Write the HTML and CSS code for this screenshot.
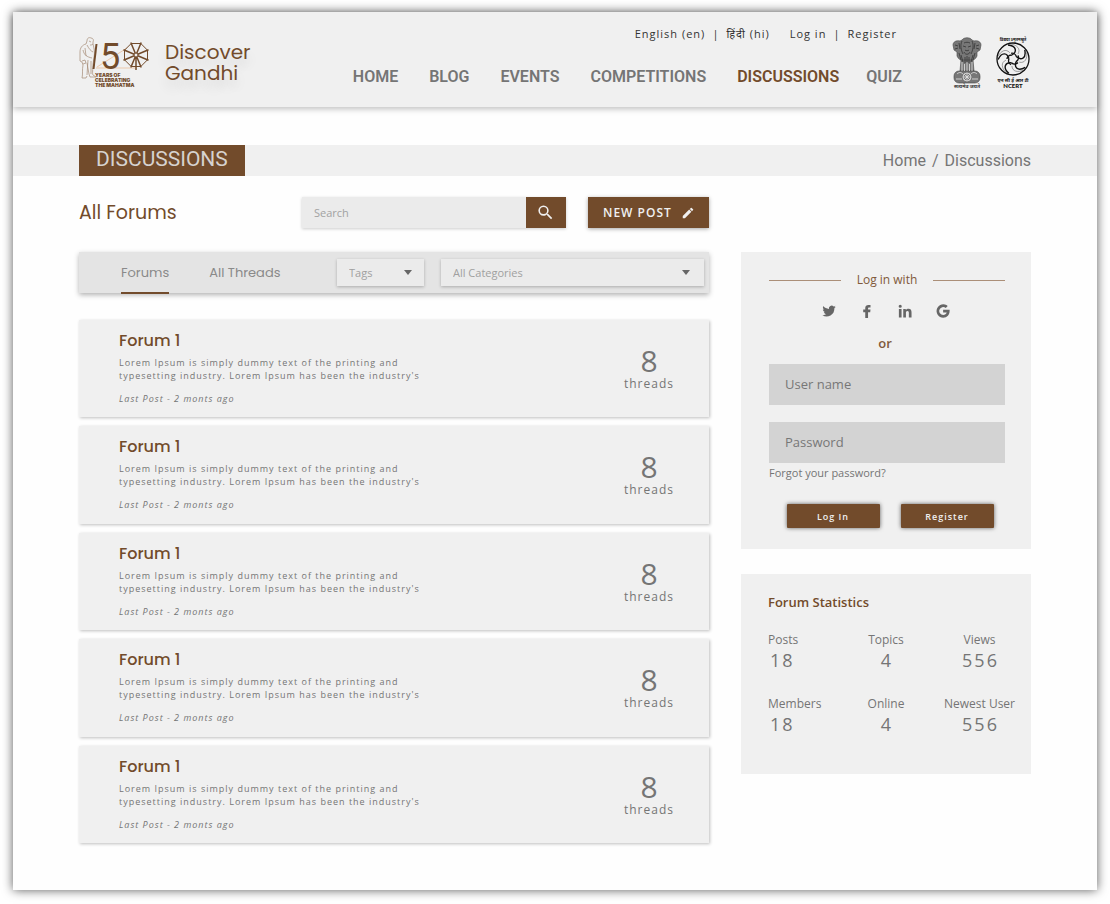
FILE: index.html
```html
<!DOCTYPE html>
<html lang="en">
<head>
<meta charset="utf-8">
<title>Discover Gandhi - Discussions</title>
<link rel="stylesheet" href="styles.css">
</head>
<body>
<div class="page">
  <header class="header">
    <a class="brand" href="#">
      <svg class="logo" viewBox="0 0 72 54" role="img" aria-label="150 years of celebrating the Mahatma">
        <path class="tint" d="M18 31 L48 12 M17 32 H58"/>
        <g class="figure">
          <path d="M8 5c0-3 2-4 4-3 2 0 3 2 2 4l0 2c-1 1-2 1-3 1M8 5l-1 3c-4 1-6 4-6 8v9l2 1 1 3c-1 5 0 9-1 13l4 0 1-2M14 8c1 4 2 8 1 14l-1 6c0 5-1 10 0 11l3 2h-6l-1-3-2-11M4 14c1 5 4 7 9 8M8 9c2 4 4 6 6 7M3 25l3-1 1 3-3 1M9 24l-1 15M12 25l0 13M10 5l2 1M6 12l1 8"/>
        </g>
        <path class="staff" d="M17.500 8 L14.500 33"/>
        <text class="numeral" x="21" y="33">5</text>
        <g class="wheel">
          <path d="M52.200 7.500H61.800L68.500 14.200V23.800L61.800 30.500H52.200L45.500 23.800V14.200z"/>
          <path class="spokes" d="M51.800 6.500L62.200 31.500M62.200 6.500L51.800 31.500M44.500 13.800L69.500 24.200M69.500 13.800L44.500 24.200M57 19V34"/>
          <circle cx="57" cy="19" r="2"/>
        </g>
        <g class="caption">
          <text x="16" y="41">YEARS OF</text>
          <text x="16" y="46">CELEBRATING</text>
          <text x="16" y="51">THE MAHATMA</text>
        </g>
      </svg>
      <span class="brand-name">Discover<br>Gandhi</span>
    </a>
    <div class="menus">
      <nav class="utility" aria-label="Language and account">
        <a href="#">English (en)</a><span>|</span><a href="#">हिंदी (hi)</a>
        <a class="utility-account" href="#">Log in</a><span>|</span><a href="#">Register</a>
      </nav>
      <nav class="main-nav" aria-label="Main">
        <a href="#">HOME</a>
        <a href="#">BLOG</a>
        <a href="#">EVENTS</a>
        <a href="#">COMPETITIONS</a>
        <a class="current" href="#" aria-current="page">DISCUSSIONS</a>
        <a href="#">QUIZ</a>
      </nav>
    </div>
    <div class="emblems">
      <svg class="emblem" viewBox="0 0 30 52" role="img" aria-label="Emblem of India">
        <g class="emblem-fill">
          <path d="M10 3c2-3 8-3 10 0l2 1c4-1 7 1 7 4l-1 5-3 2v4c-1 3-4 4-5 5H10c-1-1-4-2-5-5v-4l-3-2-1-5c0-3 3-5 7-4z"/>
          <path d="M9 23h12l1 11H8z"/>
          <rect x="2" y="34" width="26" height="12" rx="5"/>
        </g>
        <path class="emblem-line" d="M10 4c-2 4-1 9 1 13M20 4c2 4 1 9-1 13M12 6c2-1 4-1 6 0M11 9l3 1M19 9l-3 1M13 13c1 1 3 1 4 0M12 15c1 3 5 3 6 0M9 18l2 7M21 18l-2 7M13 20v6M15 19v7M17 20v6M7 16l2 7M23 16l-2 7M3 8l3 1M27 8l-3 1M3 12l3-1M27 12l-3-1M7 6l1 6M23 6l-1 6"/>
        <path class="emblem-light" d="M10 25v9M12.500 27v7M15 25v9M17.500 27v7M20 25v9M5 37c2-2 4-2 6 0M19 37c2-2 4-2 6 0M4 42h6M20 42h6"/>
        <circle class="emblem-light" cx="15" cy="40" r="4"/>
        <path class="emblem-light" d="M11 40h8M15 36v8M12 37l6 6M18 37l-6 6"/>
        <text class="emblem-text" x="15" y="51">सत्यमेव जयते</text>
      </svg>
      <svg class="ncert" viewBox="0 0 36 52" role="img" aria-label="NCERT">
        <text class="ncert-small" x="18" y="4">विद्यया ऽमृतमश्नुते</text>
        <circle class="ncert-ring" cx="18" cy="22" r="16"/>
        <g class="ncert-swirl">
          <path d="M17 18c5-3 5-9-4-10M17 18c-3 0-5 2-5 4"/>
          <path d="M17 18c5-3 5-9-4-10M17 18c-3 0-5 2-5 4" transform="rotate(72 18 22)"/>
          <path d="M17 18c5-3 5-9-4-10M17 18c-3 0-5 2-5 4" transform="rotate(144 18 22)"/>
          <path d="M17 18c5-3 5-9-4-10M17 18c-3 0-5 2-5 4" transform="rotate(216 18 22)"/>
          <path d="M17 18c5-3 5-9-4-10M17 18c-3 0-5 2-5 4" transform="rotate(288 18 22)"/>
        </g>
        <g class="ncert-trace">
          <path d="M23 17c3-5-1-9-7-10"/>
          <path d="M23 17c3-5-1-9-7-10" transform="rotate(72 18 22)"/>
          <path d="M23 17c3-5-1-9-7-10" transform="rotate(144 18 22)"/>
          <path d="M23 17c3-5-1-9-7-10" transform="rotate(216 18 22)"/>
          <path d="M23 17c3-5-1-9-7-10" transform="rotate(288 18 22)"/>
        </g>
        <text class="ncert-hindi" x="18" y="45">एन सी ई आर टी</text>
        <text class="ncert-name" x="18" y="51">NCERT</text>
      </svg>
    </div>
  </header>

  <div class="title-band">
    <h1>DISCUSSIONS</h1>
    <nav class="breadcrumb" aria-label="Breadcrumb"><a href="#">Home</a><span>/</span><a href="#">Discussions</a></nav>
  </div>

  <div class="content">
    <main class="forums">
      <div class="toolbar">
        <h2>All Forums</h2>
        <form class="search">
          <input type="search" placeholder="Search" aria-label="Search">
          <button type="button" aria-label="Search">
            <svg viewBox="0 0 24 24"><path d="M15.500 14h-.79l-.28-.27A6.470 6.470 0 0 0 16 9.500 6.500 6.500 0 1 0 9.500 16c1.610 0 3.090-.59 4.230-1.570l.27.28v.79l5 4.990L20.490 19zm-6 0a4.500 4.500 0 1 1 0-9 4.500 4.500 0 0 1 0 9z"/></svg>
          </button>
        </form>
        <button class="new-post" type="button">NEW POST
          <svg viewBox="0 0 24 24"><path d="M3 17.250V21h3.750L17.810 9.940l-3.750-3.750zM20.710 7.040a1 1 0 0 0 0-1.410l-2.340-2.340a1 1 0 0 0-1.410 0l-1.830 1.830 3.750 3.750z"/></svg>
        </button>
      </div>

      <div class="filters">
        <nav class="tabs" aria-label="View">
          <a class="tab active" href="#">Forums</a>
          <a class="tab" href="#">All Threads</a>
        </nav>
        <div class="picker picker-tags"><select aria-label="Tags"><option>Tags</option></select></div>
        <div class="picker picker-categories"><select aria-label="Categories"><option>All Categories</option></select></div>
      </div>

      <div class="forum-list">
        <article class="forum">
          <div class="forum-info">
            <h3>Forum 1</h3>
            <p class="about">Lorem Ipsum is simply dummy text of the printing and<br>typesetting industry. Lorem Ipsum has been the industry's</p>
            <p class="last-post">Last Post - 2 monts ago</p>
          </div>
          <div class="threads"><strong>8</strong><span>threads</span></div>
        </article>
        <article class="forum">
          <div class="forum-info">
            <h3>Forum 1</h3>
            <p class="about">Lorem Ipsum is simply dummy text of the printing and<br>typesetting industry. Lorem Ipsum has been the industry's</p>
            <p class="last-post">Last Post - 2 monts ago</p>
          </div>
          <div class="threads"><strong>8</strong><span>threads</span></div>
        </article>
        <article class="forum">
          <div class="forum-info">
            <h3>Forum 1</h3>
            <p class="about">Lorem Ipsum is simply dummy text of the printing and<br>typesetting industry. Lorem Ipsum has been the industry's</p>
            <p class="last-post">Last Post - 2 monts ago</p>
          </div>
          <div class="threads"><strong>8</strong><span>threads</span></div>
        </article>
        <article class="forum">
          <div class="forum-info">
            <h3>Forum 1</h3>
            <p class="about">Lorem Ipsum is simply dummy text of the printing and<br>typesetting industry. Lorem Ipsum has been the industry's</p>
            <p class="last-post">Last Post - 2 monts ago</p>
          </div>
          <div class="threads"><strong>8</strong><span>threads</span></div>
        </article>
        <article class="forum">
          <div class="forum-info">
            <h3>Forum 1</h3>
            <p class="about">Lorem Ipsum is simply dummy text of the printing and<br>typesetting industry. Lorem Ipsum has been the industry's</p>
            <p class="last-post">Last Post - 2 monts ago</p>
          </div>
          <div class="threads"><strong>8</strong><span>threads</span></div>
        </article>
      </div>
    </main>

    <aside class="sidebar">
      <form class="login">
        <div class="login-with">Log in with</div>
        <div class="social">
          <a href="#" aria-label="Twitter"><svg viewBox="0 0 24 24"><path d="M23.600 4.900c-.8.400-1.700.6-2.700.7 1-.6 1.700-1.500 2-2.500-.9.500-1.900.9-3 1.100a4.700 4.700 0 0 0-8 4.300C8 8.300 4.500 6.500 2.200 3.600a4.700 4.700 0 0 0 1.400 6.200c-.7 0-1.500-.2-2.100-.6 0 2.300 1.600 4.200 3.800 4.700-.7.200-1.400.2-2.100.1.600 1.900 2.300 3.200 4.400 3.300A9.400 9.400 0 0 1 .6 19.200 13.300 13.300 0 0 0 21.200 7.300c1-.7 1.800-1.500 2.400-2.400z"/></svg></a>
          <a href="#" aria-label="Facebook"><svg viewBox="0 0 24 24"><path d="M9 24v-10H5.500V9.500H9V7C9 3.500 11 1.500 14.500 1.500H18v4.300h-2.200C14.300 5.800 13.800 6.500 13.800 7.500v2H18l-.5 4.500h-3.700v10z"/></svg></a>
          <a href="#" aria-label="LinkedIn"><svg viewBox="0 0 24 24"><path d="M1.500 8.500h4.600V23H1.500zM3.800 1.200a2.700 2.700 0 1 1 0 5.400 2.700 2.700 0 0 1 0-5.400zM9 8.500h4.400v2c.7-1.300 2.200-2.400 4.500-2.400 4.300 0 5.300 2.700 5.300 6.600V23h-4.600v-7.400c0-1.800-.2-3.600-2.300-3.600-2.200 0-2.700 1.600-2.700 3.500V23H9z"/></svg></a>
          <a href="#" aria-label="Google"><svg viewBox="0 0 24 24"><path d="M12.200 10v4.500h6.200c-.8 2.700-3 4.300-6 4.300a6.800 6.800 0 1 1 4.300-12l3.400-3.400A11.500 11.500 0 1 0 12.200 23.500c7.500 0 11.800-5.400 11.100-13.500z"/></svg></a>
        </div>
        <p class="or">or</p>
        <input class="field" type="text" placeholder="User name" aria-label="User name">
        <input class="field" type="password" placeholder="Password" aria-label="Password">
        <a class="forgot" href="#">Forgot your password?</a>
        <div class="login-actions">
          <button type="button">Log In</button>
          <button type="button">Register</button>
        </div>
      </form>

      <section class="statistics">
        <h2>Forum Statistics</h2>
        <dl class="stats">
          <div><dt>Posts</dt><dd>18</dd></div>
          <div><dt>Topics</dt><dd>4</dd></div>
          <div><dt>Views</dt><dd>556</dd></div>
          <div><dt>Members</dt><dd>18</dd></div>
          <div><dt>Online</dt><dd>4</dd></div>
          <div><dt>Newest User</dt><dd>556</dd></div>
        </dl>
      </section>
    </aside>
  </div>
</div>
</body>
</html>
```
FILE: styles.css
```css
:root {
  --brown: #724b2b;
  --panel: #f0f0f0;
  --grey: #757575;
  --body: "Segoe UI", "Open Sans", "Noto Sans", sans-serif;
  --display: Poppins, Inter, sans-serif;
}

* { box-sizing: border-box; }

body {
  margin: 0;
  padding: 12px 13px 14px;
  background: #fff;
  color: var(--grey);
  font-family: var(--body);
  font-size: 12px;
}

h1, h2, h3, p, dl, dd { margin: 0; }
a { color: inherit; text-decoration: none; }
button, input, select { font: inherit; border: 0; border-radius: 0; }
button { color: #f0f0f0; background: var(--brown); cursor: pointer; }
input::placeholder { color: inherit; opacity: 1; }

.page {
  display: flex;
  flex-direction: column;
  min-height: calc(100vh - 26px);
  background: #fefefe;
  box-shadow: 0 0 10px rgba(0, 0, 0, .65);
}

/* Header */
.header {
  display: flex;
  align-items: flex-start;
  padding: 12px 66px 17px;
  background: var(--panel);
  box-shadow: 0 2px 6px rgba(0, 0, 0, .25);
}

.brand { display: flex; align-items: center; gap: 14px; padding-top: 12px; color: var(--brown); }
.logo { width: 72px; height: 54px; }
.brand-name { font: 400 20px/21px var(--display); text-shadow: 0 8px 12px rgba(0, 0, 0, .12); }

.tint { fill: none; stroke: #ecc9ac; stroke-width: 1; }
.figure { fill: none; stroke: #a58a74; stroke-width: .7; }
.staff { fill: none; stroke: var(--brown); stroke-width: 2; }
.numeral { fill: var(--brown); font: 400 36px Roboto, sans-serif; }
.wheel { fill: none; stroke: var(--brown); stroke-width: 1; }
.wheel .spokes { stroke-width: 1.5; }
.wheel circle { fill: var(--panel); }
.caption { fill: var(--brown); font: 900 5px Inter, sans-serif; }

.menus { display: flex; flex-direction: column; align-items: flex-end; gap: 23px; margin-left: auto; }
.utility {
  display: flex;
  gap: 7px;
  padding-right: 5px;
  color: #333;
  font-size: 11px;
  line-height: 20px;
  letter-spacing: 1px;
}
.utility-account { margin-left: 13px; }
.main-nav { display: flex; gap: 31px; font: 600 16px/20px Roboto, sans-serif; }
.main-nav .current { margin-right: -4px; color: var(--brown); }

.emblems { display: flex; gap: 13px; margin-left: 50px; padding-top: 13px; }
.emblem { width: 30px; height: 52px; }
.ncert { width: 36px; height: 52px; overflow: visible; }
.emblem-fill { fill: #777; stroke: #444; stroke-width: .6; }
.emblem-line { fill: none; stroke: #333; stroke-width: .8; }
.emblem-light { fill: none; stroke: #e4e4e4; stroke-width: .8; }
.emblem-text { fill: #333; font: 700 5px var(--body); text-anchor: middle; }
.ncert text { fill: #111; text-anchor: middle; }
.ncert-small { font: 700 4px var(--body); }
.ncert-hindi { font: 700 5px var(--body); }
.ncert-name { font: 900 6px Lato, sans-serif; }
.ncert-ring { fill: none; stroke: #111; stroke-width: 1.3; }
.ncert-swirl { fill: none; stroke: #111; stroke-width: 1.4; }
.ncert-trace { fill: none; stroke: #555; stroke-width: .5; }

/* Title band */
.title-band {
  display: flex;
  align-items: center;
  justify-content: space-between;
  margin-top: 38px;
  padding: 0 66px;
  background: var(--panel);
}
.title-band h1 {
  padding: 0 17px 3px;
  background: var(--brown);
  color: #d6d2cf;
  font: 400 21px/28px Roboto, sans-serif;
}
.breadcrumb { display: flex; gap: 6px; font: 400 16px/20px Roboto, sans-serif; }

/* Columns */
.content { display: flex; flex: 1; gap: 32px; padding: 21px 66px 47px; }
.forums { display: flex; flex: 1; flex-direction: column; min-width: 0; }
.sidebar { width: 290px; padding-top: 55px; }

.toolbar { display: flex; align-items: center; }
.toolbar h2 { flex: 1; color: var(--brown); font: 400 19px/31px var(--display); }
.search { display: flex; width: 264px; height: 31px; box-shadow: 0 1px 3px rgba(0, 0, 0, .2); }
.search input { flex: 1; min-width: 0; padding: 0 12px; background: #ebebeb; color: #a2a2a2; font-size: 11px; }
.search button { width: 40px; padding: 6px 10px; }
.search svg { display: block; width: 19px; height: 19px; fill: #f0f0f0; }
.new-post {
  display: flex;
  align-items: center;
  justify-content: space-between;
  width: 121px;
  height: 31px;
  margin-left: 22px;
  padding: 0 14px 0 15px;
  box-shadow: 0 1px 4px rgba(0, 0, 0, .35);
  font-size: 12px;
  font-weight: 600;
  letter-spacing: 1px;
}
.new-post svg { width: 14px; height: 14px; fill: #f0f0f0; }

.filters {
  display: flex;
  align-items: center;
  height: 41px;
  margin-top: 24px;
  padding: 0 5px 0 42px;
  background: #e4e4e4;
  box-shadow: 0 2px 5px rgba(0, 0, 0, .3);
}
.tabs { display: flex; flex: 1; gap: 40px; height: 42px; color: #8a8a8a; font: 400 13px/42px var(--display); }
.tab.active { border-bottom: 2px solid var(--brown); }
.picker { position: relative; box-shadow: 0 1px 3px rgba(0, 0, 0, .25); }
.picker select {
  display: block;
  width: 100%;
  height: 27px;
  padding: 0 12px;
  appearance: none;
  background: #ebebeb;
  color: #a0a0a0;
  font-size: 11px;
}
.picker::after {
  content: "";
  position: absolute;
  top: 11px;
  right: 12px;
  border: 4px solid transparent;
  border-top: 5px solid #666;
  border-bottom: 0;
  pointer-events: none;
}
.picker-tags { width: 87px; }
.picker-categories { width: 263px; margin-left: 17px; }
.picker-categories::after { right: 14px; }

/* Forum cards */
.forum-list { display: flex; flex: 1; flex-direction: column; gap: 9px; margin-top: 27px; }
.forum {
  display: flex;
  flex: 1;
  align-items: flex-start;
  justify-content: space-between;
  padding: 10px 35px 9px 40px;
  background: var(--panel);
  box-shadow: 1px 1px 3px rgba(0, 0, 0, .25);
}
.forum h3 { color: var(--brown); font: 500 16px/22px var(--display); }
.about { margin-top: 4px; font-size: 9px; line-height: 13px; letter-spacing: 1px; }
.last-post { margin-top: 10px; font-size: 9px; font-style: italic; line-height: 13px; letter-spacing: 1px; }
.threads { display: flex; flex-direction: column; align-items: center; padding-top: 15px; }
.threads strong { font-size: 30px; font-weight: 400; line-height: 31px; }
.threads span { font-size: 12px; line-height: 16px; letter-spacing: 1px; }

/* Log in */
.login {
  display: flex;
  flex-direction: column;
  padding: 18px 26px 21px 28px;
  background: var(--panel);
}
.login-with { display: flex; align-items: center; gap: 16px; color: #80593a; font-size: 12px; line-height: 20px; }
.login-with::before, .login-with::after { content: ""; flex: 1; height: 1px; background: #ab8f78; }
.social { display: flex; justify-content: center; gap: 24px; padding: 14px 2px 16px 0; }
.social a { display: flex; }
.social svg { width: 14px; height: 14px; fill: #666; }
.or { padding-right: 4px; color: #80593a; font-size: 13px; font-weight: 600; line-height: 18px; text-align: center; }
.field { width: 100%; height: 41px; padding: 0 16px 2px; background: #d3d3d3; color: #777; font-size: 13px; }
.or + .field { margin: 12px 0 17px; }
.forgot { align-self: flex-start; font-size: 11px; line-height: 20px; }
.login-actions { display: flex; justify-content: center; gap: 21px; margin-top: 21px; padding-left: 6px; }
.login-actions button {
  width: 93px;
  height: 24px;
  padding: 0;
  border-radius: 1px;
  box-shadow: 0 0 4px rgba(0, 0, 0, .6);
  font-size: 9px;
  font-weight: 600;
  letter-spacing: 1px;
}

/* Statistics */
.statistics { margin-top: 25px; padding: 18px 0 39px 27px; background: var(--panel); }
.statistics h2 { color: var(--brown); font-size: 13px; font-weight: 600; line-height: 20px; }
.stats { display: grid; grid-template-columns: 76fr 84fr 103fr; gap: 24px 0; margin-top: 19px; text-align: center; }
.stats > :nth-child(3n + 1) { text-align: left; }
.stats dt { font-size: 12px; line-height: 18px; }
.stats dd { padding-left: 2px; font-size: 18px; line-height: 22px; letter-spacing: 2px; }
```
